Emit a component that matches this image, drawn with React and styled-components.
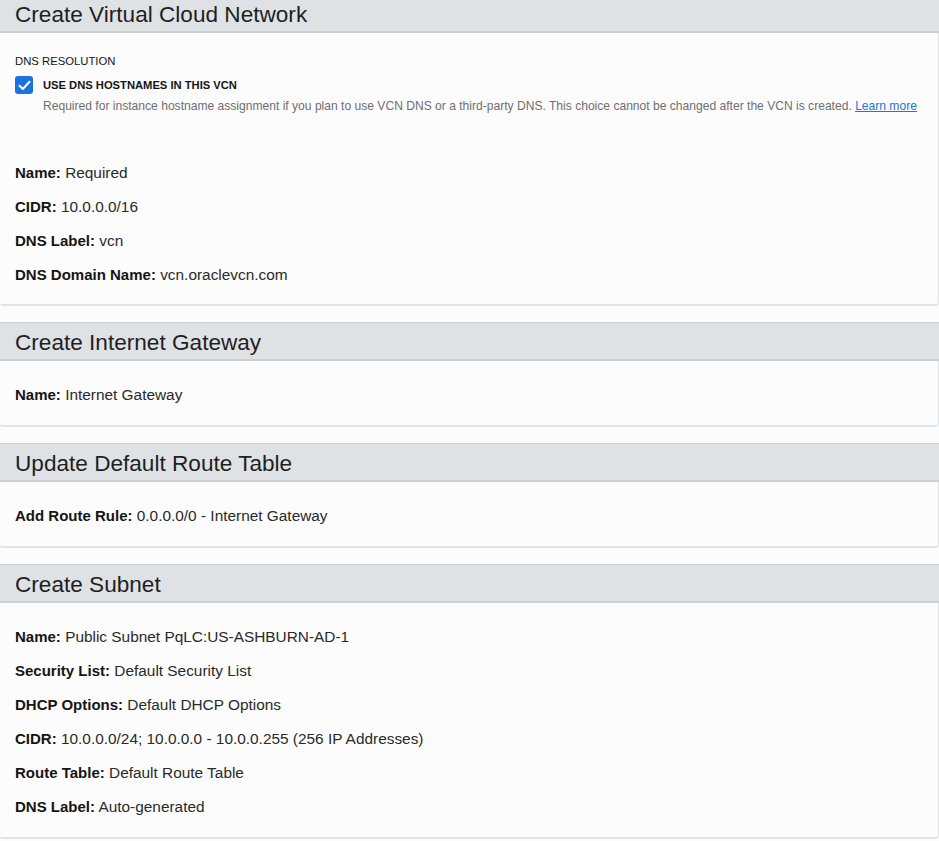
import React from "react";
import styled, { createGlobalStyle } from "styled-components";

const Global = createGlobalStyle`
  html, body { margin: 0; padding: 0; background: #fcfcfc; }
  body { font-family: "Liberation Sans", Arial, sans-serif; color: #161513; overflow: hidden; }
`;

const Page = styled.div`
  display: flex;
  flex-direction: column;
  gap: 16px;
  margin-top: -6px;
  width: 939px;
`;

const Section = styled.section`
  display: flex;
  flex-direction: column;
`;

const Header = styled.h2`
  box-sizing: border-box;
  margin: 0;
  height: 39px;
  display: flex;
  align-items: center;
  padding: 4px 15px 0;
  background: #dfe2e5;
  border-top: 1px solid #cfd2d5;
  border-bottom: 2px solid #cdd0d3;
  font-size: 22.6px;
  font-weight: 400;
  color: #1f1f1f;
`;

const Body = styled.div`
  display: flex;
  flex-direction: column;
  gap: 16px;
  padding: ${(p) => p.$pad || "25px 15px 21px"};
  background: #fcfcfc;
  border-bottom: 2px solid #e1e3e5;
  border-right: 1px solid #e1e3e5;
  border-bottom-right-radius: 4px;
  border-bottom-left-radius: 3px;
`;

const Row = styled.div`
  font-size: 15.4px;
  line-height: 18px;
  color: #2a2a2a;
  white-space: nowrap;
`;

const Label = styled.b`
  font-weight: 700;
  font-size: 15px;
  color: #161513;
`;

const Group = styled.div`
  display: flex;
  flex-direction: column;
  margin-bottom: 34px;
`;

const Caption = styled.div`
  font-size: 11.3px;
  line-height: 16px;
  color: #161513;
  margin-bottom: 7px;
`;

const CheckRow = styled.label`
  display: flex;
  align-items: center;
  gap: 10px;
  height: 18px;
`;

const Box = styled.span`
  width: 18px;
  height: 18px;
  border-radius: 3px;
  background: #1b72e0;
  display: flex;
  align-items: center;
  justify-content: center;
  flex: none;
`;

const CheckText = styled.span`
  font-size: 11.2px;
  font-weight: 700;
  color: #161513;
`;

const Help = styled.div`
  margin: 4px 0 0 28px;
  font-size: 12.08px;
  line-height: 16px;
  color: #6f6f6f;
  white-space: nowrap;
`;

const Link = styled.a`
  color: #1a73e8;
  text-decoration: underline;
`;

const Field = ({ label, value }) => (
  <Row>
    <Label>{label}:</Label> {value}
  </Row>
);

export default function App() {
  return (
    <>
      <Global />
      <Page>
        <Section>
          <Header>Create Virtual Cloud Network</Header>
          <Body $pad="20px 15px 20px">
            <Group>
              <Caption>DNS RESOLUTION</Caption>
              <CheckRow>
                <Box>
                  <svg width="13" height="11" viewBox="0 0 13 11">
                    <path d="M1.5 5.8 L4.8 9 L11.5 1.8" fill="none" stroke="#fff" strokeWidth="2" strokeLinecap="round" strokeLinejoin="round" />
                  </svg>
                </Box>
                <CheckText>USE DNS HOSTNAMES IN THIS VCN</CheckText>
              </CheckRow>
              <Help>
                Required for instance hostname assignment if you plan to use VCN DNS or a third-party DNS. This choice cannot be changed after the VCN is created.{" "}
                <Link href="#">Learn more</Link>
              </Help>
            </Group>
            <Field label="Name" value="Required" />
            <Field label="CIDR" value="10.0.0.0/16" />
            <Field label="DNS Label" value="vcn" />
            <Field label="DNS Domain Name" value="vcn.oraclevcn.com" />
          </Body>
        </Section>
        <Section>
          <Header>Create Internet Gateway</Header>
          <Body>
            <Field label="Name" value="Internet Gateway" />
          </Body>
        </Section>
        <Section>
          <Header>Update Default Route Table</Header>
          <Body>
            <Field label="Add Route Rule" value="0.0.0.0/0 - Internet Gateway" />
          </Body>
        </Section>
        <Section>
          <Header>Create Subnet</Header>
          <Body>
            <Field label="Name" value="Public Subnet PqLC:US-ASHBURN-AD-1" />
            <Field label="Security List" value="Default Security List" />
            <Field label="DHCP Options" value="Default DHCP Options" />
            <Field label="CIDR" value="10.0.0.0/24; 10.0.0.0 - 10.0.0.255 (256 IP Addresses)" />
            <Field label="Route Table" value="Default Route Table" />
            <Field label="DNS Label" value="Auto-generated" />
          </Body>
        </Section>
      </Page>
    </>
  );
}
